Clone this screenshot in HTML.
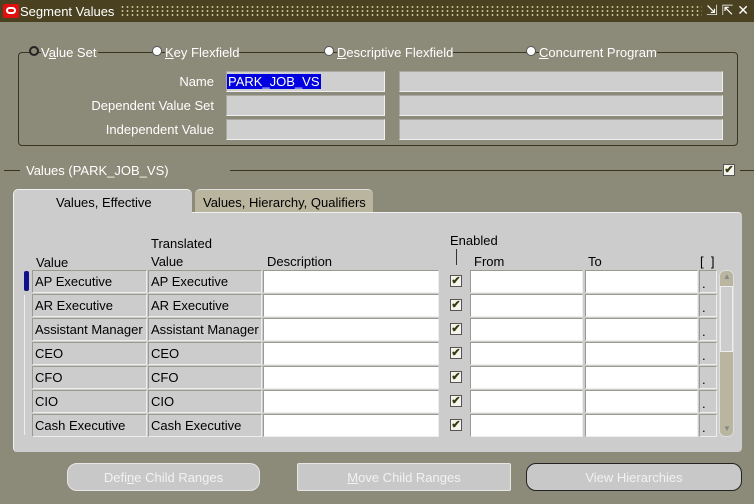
<!DOCTYPE html><html><head><style>
body{margin:0;width:754px;height:504px;overflow:hidden;background:#8c8a78;font-family:"Liberation Sans",sans-serif;font-size:12px;position:relative}
div,span{position:absolute;box-sizing:border-box}
.t{color:#fff;white-space:nowrap}
.k{color:#000;white-space:nowrap}
.f{background:#cfcfcf;border-top:1px solid #a8a8a0;border-left:1px solid #a8a8a0;border-bottom:1px solid #f0f0f0;border-right:1px solid #f0f0f0}
.g{background:#cccccc;border:1px solid #9a9a90;border-right-color:#eee;border-bottom-color:#eee;padding:3px 0 0 2px;color:#000;font-size:13px;white-space:nowrap}
.w{background:#fff;border:1px solid #9a9a90;border-right-color:#eee;border-bottom-color:#eee}
.cb{width:12px;height:12px;background:#f4f4ec;border:1px solid #555;font-size:11px;line-height:10px;text-align:center;color:#3a3a10;font-weight:bold}
.rd{width:10px;height:10px;border-radius:50%;background:#fff;border:1px solid #555}
.btn{background:#c8c8c8;border:1px solid #e6e6e6;border-radius:10px;color:#f2f2f2;text-align:center;font-size:13px;padding-top:6px}
.lb{color:#fff;white-space:nowrap;font-size:13px;text-align:right;width:200px;left:14px}
</style></head><body>
<div style="left:0;top:0;width:754px;height:22px;background:#4a4120"></div>
<div style="left:120px;top:5px;width:582px;height:12px;background-image:radial-gradient(#c8c090 1px,transparent 1.2px);background-size:5px 4px"></div>
<div style="left:3px;top:4px;width:16px;height:14px;background:#e01010;border-radius:2px"><span style="left:3px;top:3px;width:10px;height:7px;border:2px solid #fff;border-radius:4px"></span></div>
<span class="t" style="left:20px;top:4px;font-size:13px">Segment Values</span>
<span class="t" style="left:706px;top:2px;font-size:14px">⇲ ⇱ ✕</span>
<div style="left:18px;top:52px;width:720px;height:94px;border:1px solid #3a3520;border-radius:4px"></div>
<div class="rd" style="left:29px;top:46px;background:#8c8a78;border:2px solid #222"></div>
<span class="t" style="left:41px;top:45px;background:#8c8a78;padding-right:2px;font-size:13px">V<u>a</u>lue Set</span>
<div class="rd" style="left:152px;top:46px"></div>
<span class="t" style="left:165px;top:45px;background:#8c8a78;font-size:13px"><u>K</u>ey Flexfield</span>
<div class="rd" style="left:324px;top:46px"></div>
<span class="t" style="left:337px;top:45px;background:#8c8a78;font-size:13px"><u>D</u>escriptive Flexfield</span>
<div class="rd" style="left:526px;top:46px"></div>
<span class="t" style="left:539px;top:45px;background:#8c8a78;font-size:13px"><u>C</u>oncurrent Program</span>
<span class="lb" style="top:74px">Name</span>
<span class="lb" style="top:98px">Dependent Value Set</span>
<span class="lb" style="top:122px">Independent Value</span>
<div class="f" style="left:226px;top:71px;width:159px;height:21px"><span style="left:0;top:2px;background:#0000e0;color:#fff;font-size:13px;padding:0 1px">PARK_JOB_VS</span></div>
<div class="f" style="left:399px;top:71px;width:324px;height:21px"></div>
<div class="f" style="left:226px;top:95px;width:159px;height:21px"></div>
<div class="f" style="left:399px;top:95px;width:324px;height:21px"></div>
<div class="f" style="left:226px;top:119px;width:159px;height:21px"></div>
<div class="f" style="left:399px;top:119px;width:324px;height:21px"></div>
<div style="left:4px;top:170px;width:16px;height:1px;background:#3a3520"></div>
<span class="t" style="left:26px;top:163px;font-size:13px">Values (PARK_JOB_VS)</span>
<div style="left:230px;top:170px;width:492px;height:1px;background:#3a3520"></div>
<div style="left:740px;top:170px;width:14px;height:1px;background:#3a3520"></div>
<div class="cb" style="left:723px;top:164px">✔</div>
<div style="left:195px;top:189px;width:178px;height:24px;background:#b9b59e;border-radius:5px 5px 0 0;border-top:1px solid #ddd"></div>
<span class="k" style="left:203px;top:195px;font-size:13px">Values, Hierarchy, Qualifiers</span>
<div style="left:13px;top:212px;width:729px;height:240px;background:#cccccc;border-radius:0 4px 4px 4px;border-top:1px solid #f0f0f0;border-left:1px solid #f0f0f0"></div>
<div style="left:13px;top:189px;width:179px;height:26px;background:#cccccc;border-radius:5px 5px 0 0;border-top:1px solid #f0f0f0;border-left:1px solid #f0f0f0"></div>
<span class="k" style="left:56px;top:195px;font-size:13px">Values, Effective</span>
<span class="k" style="left:36px;top:255px;font-size:13px">Value</span>
<span class="k" style="left:151px;top:236px;font-size:13px">Translated</span>
<span class="k" style="left:151px;top:254px;font-size:13px">Value</span>
<span class="k" style="left:267px;top:254px;font-size:13px">Description</span>
<span class="k" style="left:450px;top:233px;font-size:13px">Enabled</span>
<div style="left:456px;top:249px;width:1px;height:16px;background:#333"></div>
<span class="k" style="left:474px;top:254px;font-size:13px">From</span>
<span class="k" style="left:588px;top:254px;font-size:13px">To</span>
<span class="k" style="left:700px;top:254px;font-size:13px">[ &nbsp;]</span>
<div style="left:24px;top:271px;width:5px;height:20px;background:#10108a;border-radius:2px"></div>
<div style="left:24px;top:295px;width:5px;height:140px;border-left:1px solid #eee"></div>
<div style="left:719px;top:270px;width:15px;height:167px;background:#b9b59e;border:1px solid #ddd;border-radius:6px"></div>
<span style="left:723px;top:272px;font-size:8px;color:#888">▲</span>
<span style="left:723px;top:424px;font-size:8px;color:#888">▼</span>
<div style="left:720px;top:286px;width:13px;height:66px;background:#ccc;border:1px solid #eee"></div>
<div id="rows"></div>
<div class="btn" style="left:67px;top:463px;width:193px;height:28px">Defi<u>n</u>e Child Ranges</div>
<div class="btn" style="left:297px;top:463px;width:214px;height:28px;border-radius:2px"><u>M</u>ove Child Ranges</div>
<div class="btn" style="left:526px;top:463px;width:216px;height:28px;border:1px solid #222">View Hierarchies</div>
<script>
var v=["AP Executive","AR Executive","Assistant Manager","CEO","CFO","CIO","Cash Executive"],h="";
v.forEach(function(s,i){var y=270+i*24;
h+='<div class="g" style="left:32px;top:'+y+'px;width:115px;height:23px">'+s+'</div>';
h+='<div class="g" style="left:148px;top:'+y+'px;width:114px;height:23px">'+s+'</div>';
h+='<div class="w" style="left:263px;top:'+y+'px;width:176px;height:23px"></div>';
h+='<div class="cb" style="left:450px;top:'+(y+5)+'px">✔</div>';
h+='<div class="w" style="left:470px;top:'+y+'px;width:113px;height:23px"></div>';
h+='<div class="w" style="left:585px;top:'+y+'px;width:113px;height:23px"></div>';
h+='<div class="g" style="left:699px;top:'+y+'px;width:18px;height:23px;padding-top:5px">.</div>';});
document.getElementById("rows").outerHTML=h;
</script>
</body></html>
